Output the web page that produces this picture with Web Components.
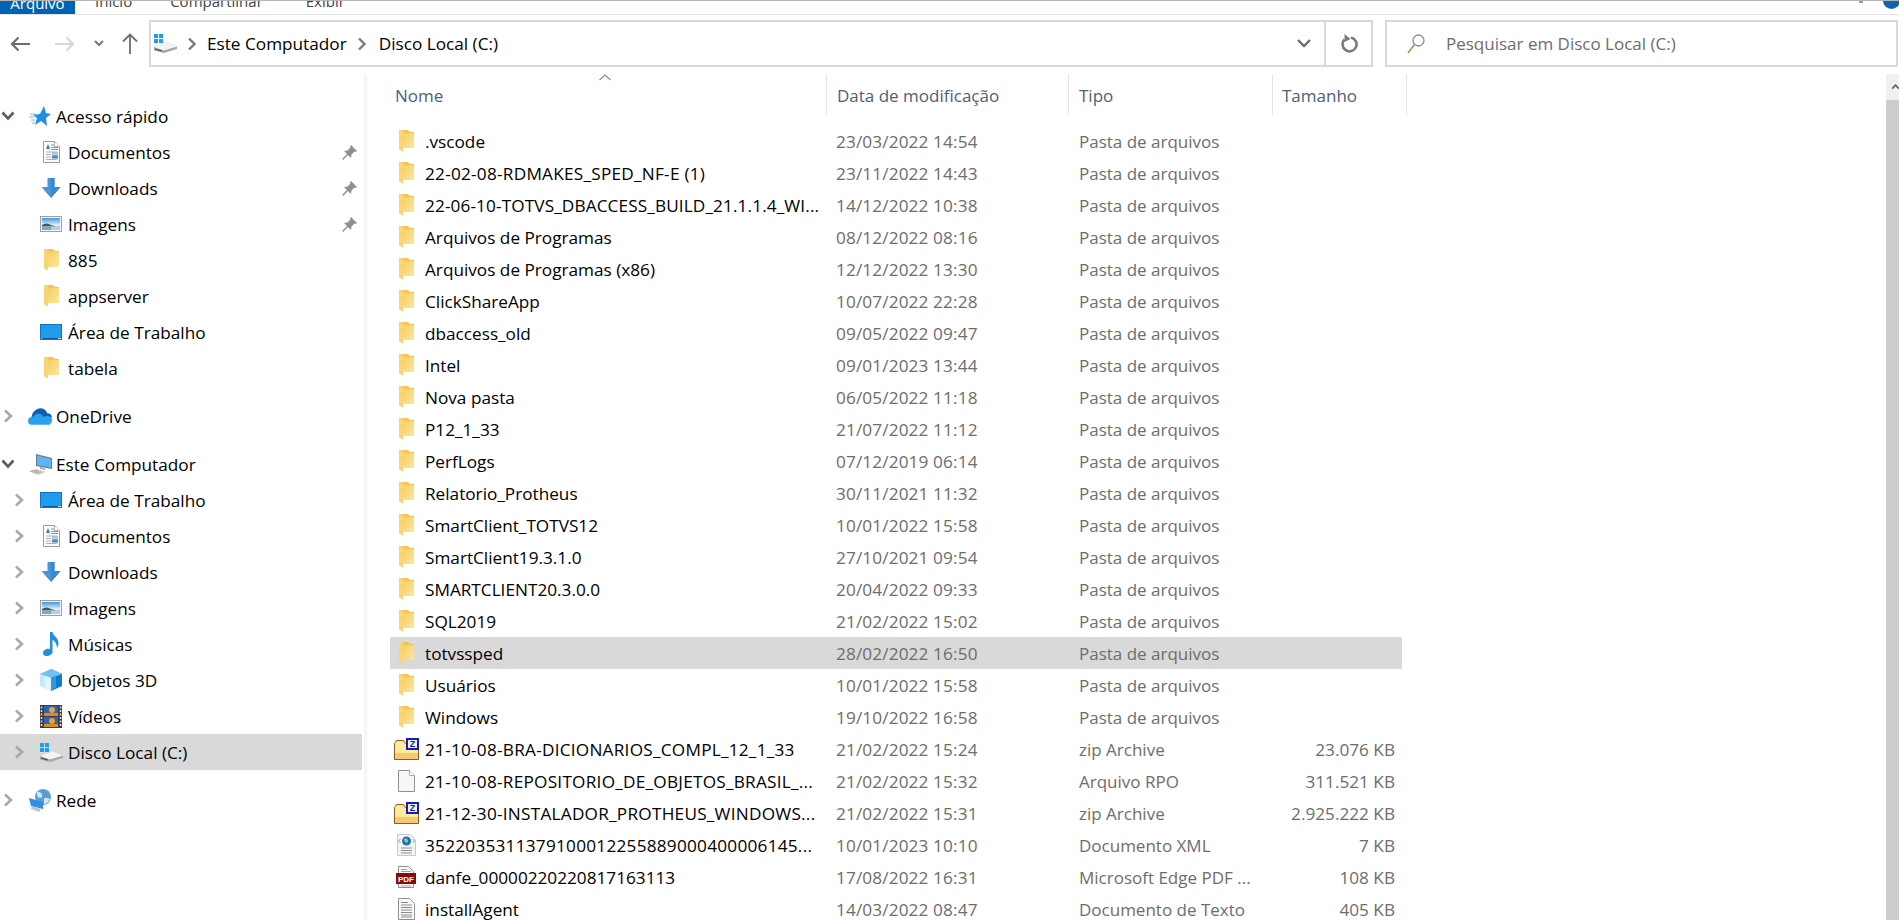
<!DOCTYPE html>
<html lang="pt-BR">
<head>
<meta charset="utf-8">
<title>Disco Local (C:)</title>
<style>
    html, body { margin: 0; height: 920px; overflow: hidden; background: #fff; }
    body { display: flex; flex-direction: column; font-family: "Open Sans", "Noto Sans", sans-serif; font-size: 17.2px; color: #000; }
    .main { display: flex; flex: 1; min-height: 0; }
</style>
</head>
<body>
<x-ribbon></x-ribbon>
<x-navbar path="Este Computador|Disco Local (C:)" search="Pesquisar em Disco Local (C:)"></x-navbar>
<div class="main">
    <x-sidebar>
        <x-tree-item icon="star" state="open">Acesso rápido</x-tree-item>
        <x-tree-item icon="doc" level="1" pin>Documentos</x-tree-item>
        <x-tree-item icon="down" level="1" pin>Downloads</x-tree-item>
        <x-tree-item icon="image" level="1" pin>Imagens</x-tree-item>
        <x-tree-item icon="folder" level="1">885</x-tree-item>
        <x-tree-item icon="folder" level="1">appserver</x-tree-item>
        <x-tree-item icon="desktop" level="1">Área de Trabalho</x-tree-item>
        <x-tree-item icon="folder" level="1">tabela</x-tree-item>
        <x-tree-item icon="onedrive" state="closed" group>OneDrive</x-tree-item>
        <x-tree-item icon="pc" state="open" group>Este Computador</x-tree-item>
        <x-tree-item icon="desktop" level="1" state="closed">Área de Trabalho</x-tree-item>
        <x-tree-item icon="doc" level="1" state="closed">Documentos</x-tree-item>
        <x-tree-item icon="down" level="1" state="closed">Downloads</x-tree-item>
        <x-tree-item icon="image" level="1" state="closed">Imagens</x-tree-item>
        <x-tree-item icon="music" level="1" state="closed">Músicas</x-tree-item>
        <x-tree-item icon="cube" level="1" state="closed">Objetos 3D</x-tree-item>
        <x-tree-item icon="video" level="1" state="closed">Vídeos</x-tree-item>
        <x-tree-item icon="disk" level="1" state="closed" selected>Disco Local (C:)</x-tree-item>
        <x-tree-item icon="network" state="closed" group>Rede</x-tree-item>
    </x-sidebar>
    <x-filelist>
        <x-file-row icon="folder" date="23/03/2022 14:54" type="Pasta de arquivos">.vscode</x-file-row>
        <x-file-row icon="folder" date="23/11/2022 14:43" type="Pasta de arquivos" caps>22-02-08-RDMAKES_SPED_NF-E (1)</x-file-row>
        <x-file-row icon="folder" date="14/12/2022 10:38" type="Pasta de arquivos" caps="tight">22-06-10-TOTVS_DBACCESS_BUILD_21.1.1.4_WI...</x-file-row>
        <x-file-row icon="folder" date="08/12/2022 08:16" type="Pasta de arquivos">Arquivos de Programas</x-file-row>
        <x-file-row icon="folder" date="12/12/2022 13:30" type="Pasta de arquivos">Arquivos de Programas (x86)</x-file-row>
        <x-file-row icon="folder" date="10/07/2022 22:28" type="Pasta de arquivos">ClickShareApp</x-file-row>
        <x-file-row icon="folder" date="09/05/2022 09:47" type="Pasta de arquivos">dbaccess_old</x-file-row>
        <x-file-row icon="folder" date="09/01/2023 13:44" type="Pasta de arquivos">Intel</x-file-row>
        <x-file-row icon="folder" date="06/05/2022 11:18" type="Pasta de arquivos">Nova pasta</x-file-row>
        <x-file-row icon="folder" date="21/07/2022 11:12" type="Pasta de arquivos">P12_1_33</x-file-row>
        <x-file-row icon="folder" date="07/12/2019 06:14" type="Pasta de arquivos">PerfLogs</x-file-row>
        <x-file-row icon="folder" date="30/11/2021 11:32" type="Pasta de arquivos">Relatorio_Protheus</x-file-row>
        <x-file-row icon="folder" date="10/01/2022 15:58" type="Pasta de arquivos">SmartClient_TOTVS12</x-file-row>
        <x-file-row icon="folder" date="27/10/2021 09:54" type="Pasta de arquivos">SmartClient19.3.1.0</x-file-row>
        <x-file-row icon="folder" date="20/04/2022 09:33" type="Pasta de arquivos">SMARTCLIENT20.3.0.0</x-file-row>
        <x-file-row icon="folder" date="21/02/2022 15:02" type="Pasta de arquivos">SQL2019</x-file-row>
        <x-file-row icon="folder" date="28/02/2022 16:50" type="Pasta de arquivos" selected>totvssped</x-file-row>
        <x-file-row icon="folder" date="10/01/2022 15:58" type="Pasta de arquivos">Usuários</x-file-row>
        <x-file-row icon="folder" date="19/10/2022 16:58" type="Pasta de arquivos">Windows</x-file-row>
        <x-file-row icon="zip" date="21/02/2022 15:24" type="zip Archive" size="23.076 KB" caps>21-10-08-BRA-DICIONARIOS_COMPL_12_1_33</x-file-row>
        <x-file-row icon="blank" date="21/02/2022 15:32" type="Arquivo RPO" size="311.521 KB" caps>21-10-08-REPOSITORIO_DE_OBJETOS_BRASIL_...</x-file-row>
        <x-file-row icon="zip" date="21/02/2022 15:31" type="zip Archive" size="2.925.222 KB" caps>21-12-30-INSTALADOR_PROTHEUS_WINDOWS...</x-file-row>
        <x-file-row icon="xml" date="10/01/2023 10:10" type="Documento XML" size="7 KB" caps>3522035311379100012255889000400006145...</x-file-row>
        <x-file-row icon="pdf" date="17/08/2022 16:31" type="Microsoft Edge PDF ..." size="108 KB">danfe_00000220220817163113</x-file-row>
        <x-file-row icon="text" date="14/03/2022 08:47" type="Documento de Texto" size="405 KB">installAgent</x-file-row>
    </x-filelist>
</div>
<script>
// every icon is drawn on its own pixel box, so w/h come from the viewBox
const ICONS = {
    folder: `<svg width="15" height="22" viewBox="0 0 15 22"><defs><linearGradient id="f" x1="0" y1="0" x2="1" y2="1"><stop offset="0" stop-color="#f6d066"/><stop offset="1" stop-color="#fde59a"/></linearGradient></defs><path d="M0 0h9l2 2h4v16H3v3l-3-2z" fill="#f2c455"/><path d="M4 3h11v15H4z" fill="url(#f)"/><path d="M0 0h4v21.500l-4-2.500z" fill="#f8d674"/></svg>`,
    star: `<svg width="22" height="20" viewBox="0 0 22 20"><path d="M1 8h6M0 11h5M2 14h4M3 17h3" stroke="#6cc0f0" stroke-width="1.2"/><path d="M15 0l2 7 5 1-5 4 1 8-6-5-6 4 2-7-4-3 7-1z" fill="#1d8fe6"/></svg>`,
    doc: `<svg width="17" height="22" viewBox="0 0 17 22"><path d="M.5.5h11l5 5v16H.5z" fill="#fbfbfb" stroke="#9a9a9a"/><path d="M11.5.5v5h5" fill="#fff" stroke="#b0b0b0"/><path d="M3 8l2-5 2 5z" fill="#2f7fc9"/><path d="M8 4h3M8 6.500h7M8 8.500h7" stroke="#5aa0d8"/><path d="M3 11h11M3 13.500h5M3 16h5M3 18.500h11" stroke="#b0b0b0"/><path d="M9 11.500h6v6H9z" fill="#5f8aa6"/><path d="M9 11.500h6v3H9z" fill="#a8d0ea"/></svg>`,
    down: `<svg width="20" height="20" viewBox="0 0 20 20"><path d="M6.500 0h7v9H19.500L10 20 .5 9H6.500z" fill="#4794e2"/><path d="M10 0h3.500v9h6L10 20z" fill="#3d86d4"/></svg>`,
    image: `<svg width="22" height="16" viewBox="0 0 22 16"><defs><linearGradient id="s" x1="0" y1="0" x2="0" y2="1"><stop offset="0" stop-color="#4a93d8"/><stop offset=".6" stop-color="#e4f1f8"/></linearGradient></defs><rect x=".5" y=".5" width="21" height="15" fill="#f4f4f4" stroke="#a0a0a0"/><rect x="2" y="2" width="18" height="12" fill="url(#s)"/><path d="M2 9c3-2 6-2 9 0l5 1.500H2z" fill="#46585c"/><path d="M2 10.500h18V14H2z" fill="#7fa8b8"/><path d="M11 11h9v3h-9z" fill="#a8d4ee"/></svg>`,
    desktop: `<svg width="22" height="16" viewBox="0 0 22 16"><rect width="22" height="16" fill="#1b6fc0"/><rect x="1" y="1" width="20" height="13" fill="#1f9bee"/><path d="M1 14h20v1H1z" fill="#bfe3f9"/><path d="M2 14.500h16" stroke="#0f5ea8"/></svg>`,
    onedrive: `<svg width="25" height="17" viewBox="0 0 25 17"><path d="M4 9C4 4 9 0 13 0c3 0 6 2 7 5 3 0 5 2 5 4z" fill="#0f5fb0"/><path d="M3.500 17C1 17 0 15 0 13c0-3 3-5 6-4.500C7 6 10 5 12 6c2 .500 3 1.500 4 3 3-2 7-1 9 1 .5 3-1 7-3 7z" fill="#29a2ee"/></svg>`,
    pc: `<svg width="24" height="21" viewBox="0 0 24 21"><path d="M8 0l16 4v11L8 12z" fill="#6b7f8f"/><path d="M9 1.500l14 3.500v8.500L9 11z" fill="#5fb4f2"/><path d="M12 13l5 1v2l-5-1z" fill="#aab"/><path d="M0 17l9-2 9 3-7 3z" fill="#d4d4d4"/><path d="M3 17.500l6-1.500M5 18.500l6-1.500M7 19.500l6-1.500" stroke="#a8a8a8"/></svg>`,
    music: `<svg width="16" height="24" viewBox="0 0 16 24"><path d="M7 0h2.500c.5 4 6.500 6 6 12-.3 2-1 3-1.500 4 0-4-2-7-4.500-8v12c0 2-3 4-6 4-2.500 0-3.500-1.500-3.500-3 0-3 4-5 7-4z" fill="#1f8fe0"/></svg>`,
    cube: `<svg width="22" height="22" viewBox="0 0 22 22"><path d="M11 0l11 5v12l-11 5z" fill="#0f79d0"/><path d="M11 0L0 5v12l11 5z" fill="#c9e9f6"/><path d="M11 0l11 5-11 4L0 5z" fill="#6fc3ee"/><path d="M11 9l5-2v11l-5 4z" fill="#2b9ae8"/><path d="M5 7l6 2v13l-6-3z" fill="#e3f3fa"/></svg>`,
    video: `<svg width="22" height="23" viewBox="0 0 22 23"><rect width="22" height="23" fill="#3c3c3c"/><path d="M1.500 1.500v20M20.500 1.500v20" stroke="#ddd" stroke-width="1.500" stroke-dasharray="2 1.500"/><rect x="4" y="1" width="14" height="10" fill="#2f62b0"/><rect x="4" y="12" width="14" height="10" fill="#2f62b0"/><path d="M4 8h14v3H4zM4 19h14v3H4z" fill="#d98a30"/><circle cx="12" cy="5" r="3" fill="#e8a040"/><circle cx="12" cy="16" r="3" fill="#e8a040"/></svg>`,
    disk: `<svg width="23" height="19" viewBox="0 0 23 19"><path d="M0 0h4v4H0zM5 0h4v4H5zM0 5h4v4H0zM5 5h4v4H5z" fill="#18a0f0"/><path d="M0 13L13 8l10 4.500V15L10 19 0 16.500z" fill="#a8a8a8"/><path d="M0 13L13 8l10 4.500-13 4z" fill="#f3f3f3"/><path d="M1 15l7 2" stroke="#4a4a4a" stroke-width="1.200"/></svg>`,
    network: `<svg width="22" height="23" viewBox="0 0 22 23"><circle cx="14" cy="8" r="8" fill="#5a9fd4"/><path d="M8 3c3-1 6 2 5 5-1 2-4 0-5-1zM15 9c3 0 5 0 6 1-1 3-4 5-6 5z" fill="#cfe5f2"/><path d="M0 9l14 4v7L2 17z" fill="#2f8fe0"/><path d="M3 17l9 3-2 3-8-3z" fill="#bcc5cc"/></svg>`,
    zip: `<svg width="25" height="22" viewBox="0 0 25 22"><path d="M.5 21.500v-16l2-3h7l2 3h13v16z" fill="#fde9a0" stroke="#8a5a20"/><path d="M1 15h23v6H1z" fill="#f3c971"/><rect x="12" y="0" width="13" height="12" fill="#1a1ab0"/><rect x="14" y="2" width="9" height="8" fill="#e8f0ff"/><text x="18.500" y="9" font-family="Liberation Sans, sans-serif" font-weight="700" font-size="9" text-anchor="middle" fill="#1a1ab0">Z</text></svg>`,
    blank: `<svg width="17" height="22" viewBox="0 0 17 22"><path d="M.5.5h11l5 5v16H.5z" fill="#f7f7f7" stroke="#8f8f8f"/><path d="M11.500.5v5h5" fill="#fff" stroke="#b0b0b0"/></svg>`,
    text: `<svg width="17" height="22" viewBox="0 0 17 22"><path d="M.5.5h11l5 5v16H.5z" fill="#fbfbfb" stroke="#8f8f8f"/><path d="M3 4.500h7M3 7h11M3 9.500h11M3 12h11M3 14.500h11M3 17h11M3 19h11" stroke="#8a8a8a"/></svg>`,
    xml: `<svg width="19" height="22" viewBox="0 0 19 22"><path d="M.5.5h13l5 5v16H.5z" fill="#f5f5f5" stroke="#c8c8c8"/><path d="M4 14h11M4 16.500h11M4 19h11" stroke="#8f8f8f"/><circle cx="9.500" cy="7" r="4.500" fill="#1f6fc0"/><path d="M7 5c2-1 4 0 4 2s-2 2-3 1z" fill="#9fd06f"/><path d="M3.500 5L1.500 7l2 2M15.500 5l2 2-2 2" fill="none" stroke="#9a9a9a"/></svg>`,
    pdf: `<svg width="20" height="22" viewBox="0 0 20 22"><path d="M2.500.5h10l5 5v16h-15z" fill="#fafafa" stroke="#8f8f8f"/><path d="M5 3.500h6M5 5.500h10M5 20h10" stroke="#a0a0a0"/><rect y="7" width="20" height="11" fill="#8a0a0a"/><text x="10" y="15.500" font-family="Liberation Sans, sans-serif" font-weight="700" font-size="8" text-anchor="middle" fill="#fff">PDF</text></svg>`,
    pin: `<svg width="15" height="15" viewBox="0 0 15 15"><path d="M9 0l6 6-1.500 1-1-.5L9.500 9.500 9 13 6 10 1 15 0 14l5-5-3-3 3.500-.5L8.500 2.500 8 1.500z" fill="#8b8f93"/></svg>`
};

class XIcon extends HTMLElement {
    static observedAttributes = ['name'];
    constructor() {
        super();
        this.attachShadow({ mode: 'open' });
    }
    attributeChangedCallback() {
        this.shadowRoot.innerHTML = `<style>:host{display:inline-flex;align-items:center;justify-content:center} svg{display:block}</style>${ICONS[this.getAttribute('name')] || ''}`;
    }
}
customElements.define('x-icon', XIcon);

const ribbonTpl = document.createElement('template');
ribbonTpl.innerHTML = /*html*/`
<style>
    :host {
        display: flex;
        flex: none;
        height: 15px;
        box-sizing: border-box;
        border-top: 1px solid #b5b5b5;
        border-bottom: 1px solid #e3e3e3;
        overflow: hidden;
        position: relative;
        font-size: 15px;
        color: #444;
    }
    .tab { margin-top: -12px; height: 24px; line-height: 24px; }
    .file { width: 75px; background: #0063b1; color: #fff; text-align: center; margin-top: -1px; height: 15px; line-height: 0; }
    .file span { display: block; transform: translateY(-4px); line-height: 14px; }
    .help {
        position: absolute; right: -1px; top: -9px;
        width: 17px; height: 17px; border-radius: 50%;
        background: #0f62b5;
    }
    .dot { position: absolute; right: 36px; top: 0; width: 4px; height: 2px; background: #999; }
</style>
<div class="tab file"><span>Arquivo</span></div>
<div class="tab" style="margin-left:20px">Início</div>
<div class="tab" style="margin-left:38px">Compartilhar</div>
<div class="tab" style="margin-left:43px">Exibir</div>
<div class="dot"></div>
<div class="help"></div>
`;
class XRibbon extends HTMLElement {
    constructor() {
        super();
        this.attachShadow({ mode: 'open' });
        this.shadowRoot.appendChild(ribbonTpl.content.cloneNode(true));
    }
}
customElements.define('x-ribbon', XRibbon);

const navTpl = document.createElement('template');
navTpl.innerHTML = /*html*/`
<style>
    :host {
        display: flex;
        flex: none;
        height: 59px;
        box-sizing: border-box;
        padding: 5px 1px 7px 0;
    }
    .cell { display: flex; align-items: center; justify-content: center; box-sizing: border-box; }
    .box {
        display: flex;
        align-items: center;
        box-sizing: border-box;
        height: 47px;
        border: 2px solid #d9d9d9;
    }
    .address { flex: 0 0 1224px; }
    .disk { margin-left: 3px; }
    .sep { margin: 0 9px; }
    span + .sep { margin-right: 11px; }
    .path { display: flex; align-items: center; flex: 1; }
    .drop { width: 40px; }
    .refresh { width: 47px; height: 100%; border-left: 2px solid #d9d9d9; }
    .search { flex: 1; margin-left: 12px; color: #6d6d6d; font-size: 17px; }
    .search svg { margin-left: 20px; }
    .search span { margin-left: 21px; }
</style>
<div class="cell" style="width:40px">
    <svg width="20" height="16" viewBox="0 0 20 16"><path d="M20 8H2M8.500 1.500L2 8l6.500 6.500" fill="none" stroke="#6d6d6d" stroke-width="2.200"/></svg>
</div>
<div class="cell" style="width:50px">
    <svg width="20" height="16" viewBox="0 0 20 16"><path d="M0 8h18M11.500 1.500L18 8l-6.500 6.500" fill="none" stroke="#d6d6d6" stroke-width="2.200"/></svg>
</div>
<div class="cell" style="width:18px">
    <svg width="10" height="7" viewBox="0 0 10 7"><path d="M1 1l4 4 4-4" fill="none" stroke="#7a7a7a" stroke-width="2"/></svg>
</div>
<div class="cell" style="width:41px;padding-left:3px">
    <svg width="16" height="21" viewBox="0 0 16 21"><path d="M8 21V2M1 8.500L8 1.500l7 7" fill="none" stroke="#6d6d6d" stroke-width="1.800"/></svg>
</div>
<div class="box address">
    <x-icon name="disk" class="disk"></x-icon>
    <div class="path"></div>
    <div class="cell drop"><svg width="14" height="9" viewBox="0 0 14 9"><path d="M1 1l6 6 6-6" fill="none" stroke="#6d6d6d" stroke-width="2.400"/></svg></div>
    <div class="cell refresh"><svg width="18" height="20" viewBox="0 0 18 20"><path d="M11 3.500A7 7 0 1 1 4.500 5.500" fill="none" stroke="#7a7a7a" stroke-width="2.600"/><path d="M10 0v8l-6-3z" fill="#7a7a7a" transform="matrix(-1 0 0 1 14.500 0)"/></svg></div>
</div>
<div class="box search">
    <svg width="18" height="20" viewBox="0 0 18 20"><circle cx="11.500" cy="6.500" r="5.500" fill="none" stroke="#8a8a8a" stroke-width="1.300"/><path d="M7.500 10.500L1 19" stroke="#b08a60" stroke-width="1.500"/></svg>
    <span></span>
</div>
`;
class XNavbar extends HTMLElement {
    constructor() {
        super();
        this.attachShadow({ mode: 'open' });
        this.shadowRoot.appendChild(navTpl.content.cloneNode(true));
    }
    connectedCallback() {
        const path = this.shadowRoot.querySelector('.path');
        this.getAttribute('path').split('|').forEach(part => {
            path.insertAdjacentHTML('beforeend', `<svg class="sep" width="12" height="14" viewBox="0 0 12 14"><path d="M3 1.500l5.500 5.500L3 12.500" fill="none" stroke="#7a7a7a" stroke-width="2.400"/></svg><span>${part}</span>`);
        });
        this.shadowRoot.querySelector('.search span').textContent = this.getAttribute('search');
    }
}
customElements.define('x-navbar', XNavbar);

const sidebarTpl = document.createElement('template');
sidebarTpl.innerHTML = /*html*/`
<style>
    :host {
        display: block;
        flex: none;
        width: 367px;
        box-sizing: border-box;
        padding-top: 24px;
        border-right: 3px solid #f5f5f5;
        overflow: hidden;
    }
</style>
<slot></slot>
`;
class XSidebar extends HTMLElement {
    constructor() {
        super();
        this.attachShadow({ mode: 'open' });
        this.shadowRoot.appendChild(sidebarTpl.content.cloneNode(true));
    }
}
customElements.define('x-sidebar', XSidebar);

const treeTpl = document.createElement('template');
treeTpl.innerHTML = /*html*/`
<style>
    :host {
        display: flex;
        align-items: center;
        width: 362px;
        height: 36px;
        box-sizing: border-box;
        white-space: nowrap;
    }
    :host([level="1"]) { padding-left: 11px; }
    :host([group]) { margin-top: 12px; }
    :host([selected]) { background: #d9d9d9; }
    .chev { width: 16px; display: flex; justify-content: center; }
    x-icon { width: 24px; margin-left: 12px; }
    .label { margin-left: 4px; }
    :host([level="1"]) .label { margin-left: 5px; }
    .pin { margin-left: auto; margin-right: 5px; width: auto; }
</style>
<div class="chev"></div>
<x-icon></x-icon>
<span class="label"><slot></slot></span>
`;
const CHEVRONS = {
    open: `<svg width="14" height="10" viewBox="0 0 14 10"><path d="M1.500 1.500L7 7.500l5.500-6" fill="none" stroke="#576060" stroke-width="2.600"/></svg>`,
    closed: `<svg width="10" height="14" viewBox="0 0 10 14"><path d="M2 1.500L8 7l-6 5.500" fill="none" stroke="#a8a8a8" stroke-width="2.600"/></svg>`
};
class XTreeItem extends HTMLElement {
    constructor() {
        super();
        this.attachShadow({ mode: 'open' });
        this.shadowRoot.appendChild(treeTpl.content.cloneNode(true));
    }
    connectedCallback() {
        this.shadowRoot.querySelector('.chev').innerHTML = CHEVRONS[this.getAttribute('state')] || '';
        this.shadowRoot.querySelector('x-icon').setAttribute('name', this.getAttribute('icon'));
        if (this.hasAttribute('pin')) {
            const pin = document.createElement('x-icon');
            pin.className = 'pin';
            pin.setAttribute('name', 'pin');
            this.shadowRoot.appendChild(pin);
        }
    }
}
customElements.define('x-tree-item', XTreeItem);

const listTpl = document.createElement('template');
listTpl.innerHTML = /*html*/`
<style>
    :host {
        display: flex;
        flex: 1;
        min-width: 0;
        overflow: hidden;
    }
    .content { flex: 1; min-width: 0; }
    .head {
        display: flex;
        height: 41px;
        color: #4c607a;
        font-size: 17px;
        line-height: 44px;
        position: relative;
    }
    .head div { box-sizing: border-box; border-right: 1px solid #e5e5e5; white-space: nowrap; }
    .caret { position: absolute; left: 232px; top: 0; }
    .rows { margin: 10px 0 0 23px; width: 1012px; }
    .bar { flex: none; width: 13px; background: #cdcdcd; }
    .up { height: 26px; background: #f0f0f0; display: flex; align-items: center; }
    .up svg { margin-left: 6px; }
</style>
<div class="content">
    <div class="head">
        <div style="width:460px;padding-left:28px">Nome</div>
        <div style="width:242px;padding-left:10px">Data de modificação</div>
        <div style="width:204px;padding-left:10px">Tipo</div>
        <div style="width:134px;padding-left:9px">Tamanho</div>
        <svg class="caret" width="12" height="7" viewBox="0 0 12 7"><path d="M.5 6L6 1l5.500 5" fill="none" stroke="#8a8a8a" stroke-width="1.100"/></svg>
    </div>
    <div class="rows"><slot></slot></div>
</div>
<div class="bar"><div class="up"><svg width="12" height="10" viewBox="0 0 12 10"><path d="M0 8l6-6 6 6" fill="none" stroke="#606060" stroke-width="3"/></svg></div></div>
`;
class XFilelist extends HTMLElement {
    constructor() {
        super();
        this.attachShadow({ mode: 'open' });
        this.shadowRoot.appendChild(listTpl.content.cloneNode(true));
    }
}
customElements.define('x-filelist', XFilelist);

const rowTpl = document.createElement('template');
rowTpl.innerHTML = /*html*/`
<style>
    :host {
        display: flex;
        align-items: center;
        height: 32px;
        white-space: nowrap;
        color: #6d6d6d;
    }
    :host([selected]) { background: #d9d9d9; }
    :host([caps]) .name { letter-spacing: .25px; }
    :host([caps="tight"]) .name { letter-spacing: .12px; }
    x-icon { width: 32px; flex: none; }
    .name { width: 414px; flex: none; padding-left: 3px; box-sizing: border-box; color: #000; }
    .date { width: 243px; flex: none; letter-spacing: .13px; }
    .type { width: 203px; flex: none; font-size: 17px; }
    .size { flex: 1; text-align: right; padding-right: 7px; }
</style>
<x-icon></x-icon>
<span class="name"><slot></slot></span>
<span class="date"></span>
<span class="type"></span>
<span class="size"></span>
`;
class XFileRow extends HTMLElement {
    constructor() {
        super();
        this.attachShadow({ mode: 'open' });
        this.shadowRoot.appendChild(rowTpl.content.cloneNode(true));
    }
    connectedCallback() {
        this.shadowRoot.querySelector('x-icon').setAttribute('name', this.getAttribute('icon'));
        for (const key of ['date', 'type', 'size']) {
            this.shadowRoot.querySelector('.' + key).textContent = this.getAttribute(key) || '';
        }
    }
}
customElements.define('x-file-row', XFileRow);
</script>
</body>
</html>
